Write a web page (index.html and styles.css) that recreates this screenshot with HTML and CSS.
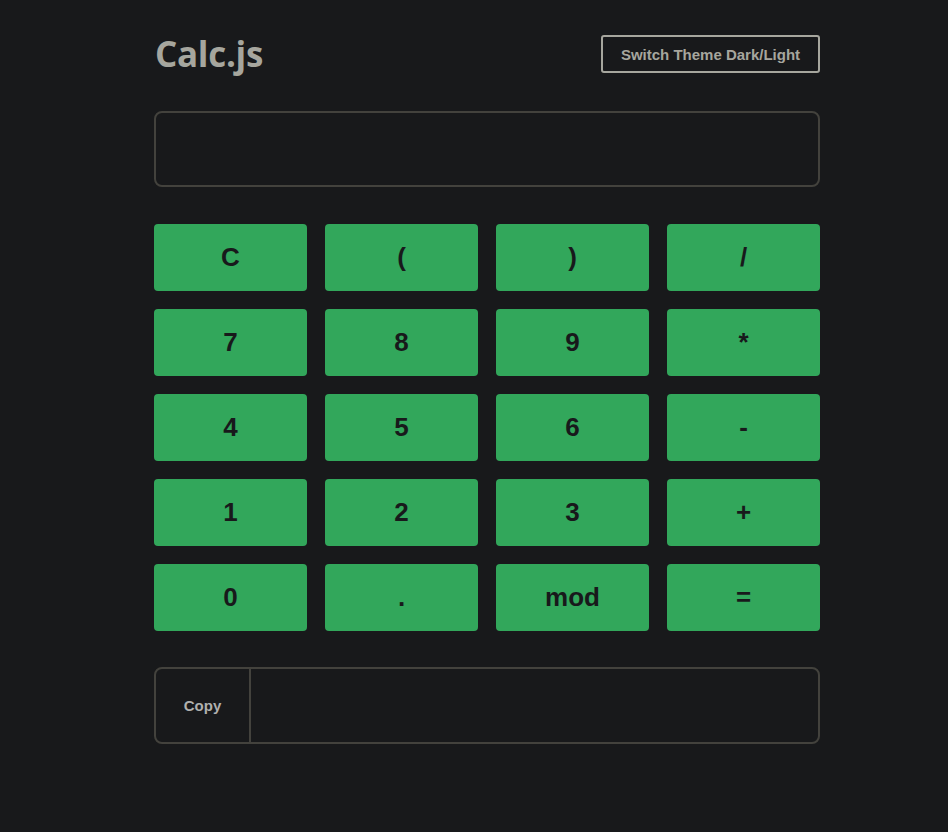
FILE: index.html
```
<!DOCTYPE html>
<html>
<head>
<meta charset="utf-8">
<title>Calc.js</title>
<link rel="stylesheet" href="styles.css">
</head>
<body>
<div class="app">
  <header class="header">
    <h1 class="title">Calc.js</h1>
    <button class="theme-btn">Switch Theme Dark/Light</button>
  </header>
  <div class="display"></div>
  <div class="keys">
    <button class="key">C</button>
    <button class="key">(</button>
    <button class="key">)</button>
    <button class="key">/</button>
    <button class="key">7</button>
    <button class="key">8</button>
    <button class="key">9</button>
    <button class="key">*</button>
    <button class="key">4</button>
    <button class="key">5</button>
    <button class="key">6</button>
    <button class="key">-</button>
    <button class="key">1</button>
    <button class="key">2</button>
    <button class="key">3</button>
    <button class="key">+</button>
    <button class="key">0</button>
    <button class="key">.</button>
    <button class="key">mod</button>
    <button class="key">=</button>
  </div>
  <div class="result">
    <button class="copy-btn">Copy</button>
    <div class="result-out"></div>
  </div>
</div>
</body>
</html>
```
FILE: styles.css
```
html, body {
  margin: 0;
  padding: 0;
  background: #18191b;
  height: 100%;
}
body {
  font-family: "Liberation Sans", Arial, sans-serif;
}
.app {
  width: 666px;
  margin-left: 154px;
  padding-top: 35px;
}
.header {
  display: flex;
  justify-content: space-between;
  align-items: center;
  height: 38px;
}
.title {
  margin: 0;
  padding-left: 1px;
  font-family: "Open Sans", sans-serif;
  font-weight: 700;
  font-size: 35px;
  letter-spacing: -0.3px;
  color: #a6a69e;
  line-height: 38px;
}
.theme-btn {
  height: 38px;
  width: 219px;
  box-sizing: border-box;
  background: transparent;
  border: 2px solid #a6a69e;
  border-radius: 3px;
  color: #a6a69e;
  font-family: "Liberation Sans", Arial, sans-serif;
  font-weight: 700;
  font-size: 15px;
  padding: 0;
}
.display {
  margin-top: 38px;
  height: 76px;
  box-sizing: border-box;
  border: 2px solid #43423d;
  border-radius: 8px;
}
.keys {
  margin-top: 37px;
  display: grid;
  grid-template-columns: repeat(4, 1fr);
  gap: 18px;
}
.key {
  height: 67px;
  background: #32a75b;
  border: none;
  border-radius: 4px;
  color: #18191b;
  font-family: "Liberation Sans", Arial, sans-serif;
  font-weight: 700;
  font-size: 26px;
  padding: 0;
}
.result {
  margin-top: 36px;
  height: 77px;
  box-sizing: border-box;
  border: 2px solid #43423d;
  border-radius: 8px;
  display: flex;
}
.copy-btn {
  width: 95px;
  background: transparent;
  border: none;
  border-right: 2px solid #43423d;
  color: #b0b0ae;
  font-family: "Liberation Sans", Arial, sans-serif;
  font-weight: 700;
  font-size: 15px;
  padding: 0;
}
.result-out {
  flex: 1;
}
```
